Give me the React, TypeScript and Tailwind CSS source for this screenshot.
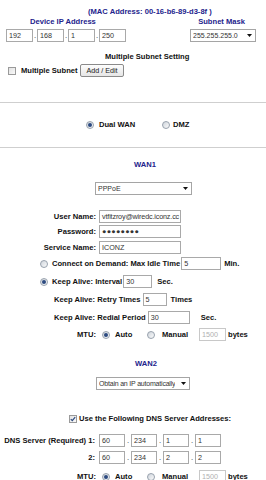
import React from 'react';

// ===== SMALL FORM PIECES =====
const Box = ({ className = '', value = '', disabled = false }: { className?: string; value?: string; disabled?: boolean }) => (
  <div
    className={`h-[13px] flex items-center pl-[2px] overflow-hidden whitespace-nowrap border bg-white font-normal text-[7.2px] shrink-0 ${
      disabled ? 'border-[#c8c8c8] text-[#b0b0b0]' : 'border-[#a9a9a9] text-[#333]'
    } ${className}`}
  >
    {value}
  </div>
);

const Dot = ({ className = '' }: { className?: string }) => (
  <span className={`h-[13px] flex items-end justify-center pb-[1px] font-normal text-[#333] shrink-0 ${className}`}>.</span>
);

const Select = ({ className = '', value }: { className?: string; value: string }) => (
  <div className={`h-[13px] flex items-center justify-between gap-[2px] pl-[2px] pr-[3px] border border-[#a5a5a5] bg-white font-normal text-[7px] text-[#333] shrink-0 ${className}`}>
    <span className="whitespace-nowrap overflow-hidden min-w-0">{value}</span>
    <svg width="5" height="3" viewBox="0 0 5 3" className="shrink-0">
      <path d="M0 0h5L2.5 3z" fill="#111" />
    </svg>
  </div>
);

const Radio = ({ checked = false }: { checked?: boolean }) => (
  <span className="w-[8px] h-[8px] rounded-full border border-[#97a1ad] bg-linear-to-br from-[#cfd5dc] to-[#fbfbfb] flex items-center justify-center shrink-0">
    {checked && <span className="w-[4px] h-[4px] rounded-full bg-[#2c4a80]" />}
  </span>
);

const Check = ({ checked = false }: { checked?: boolean }) => (
  <span className="w-[8px] h-[8px] border border-[#9a9a9a] bg-linear-to-br from-[#e2e2e2] to-[#fafafa] flex items-center justify-center shrink-0">
    {checked && (
      <svg width="6" height="6" viewBox="0 0 6 6">
        <path d="M0.8 3.2L2.3 4.7L5.2 1.2" stroke="#2c4a80" strokeWidth="1.2" fill="none" />
      </svg>
    )}
  </span>
);

const MtuRow = ({ className = '' }: { className?: string }) => (
  <div className={`h-[13px] flex items-center ${className}`}>
    <span className="w-[96px] text-right">MTU:</span>
    <span className="ml-[6px]"><Radio checked /></span>
    <span className="ml-[5px] w-[32px]">Auto</span>
    <Radio />
    <span className="ml-[7px] w-[37px]">Manual</span>
    <Box className="w-[27px]" value="1500" disabled />
    <span className="ml-[2px]">bytes</span>
  </div>
);

const App: React.FC = () => {
  return (
    <div className="w-[266px] h-[480px] overflow-hidden bg-white text-[7.6px] leading-[10px] font-bold text-[#111] font-['Liberation_Sans',Arial,sans-serif]">
      {/* LAN settings */}
      <div className="pt-[7px]">
        <div className="h-[10px] flex items-center pl-[88px] text-[#23238c]">(MAC Address: 00-16-b6-89-d3-8f )</div>
        <div className="h-[10px] flex items-center text-[#23238c]">
          <span className="ml-[30px]">Device IP Address</span>
          <span className="ml-auto mr-[21px]">Subnet Mask</span>
        </div>
        <div className="mt-[2px] h-[13px] flex items-center">
          <div className="ml-[6px] flex items-center">
            <Box className="w-[27px]" value="192" />
            <Dot className="w-[4px]" />
            <Box className="w-[27px]" value="168" />
            <Dot className="w-[4px]" />
            <Box className="w-[27px]" value="1" />
            <Dot className="w-[4px]" />
            <Box className="w-[27px]" value="250" />
          </div>
          <Select className="ml-auto mr-[10px] w-[66px]" value="255.255.255.0" />
        </div>
        <div className="mt-[10px] h-[10px] flex items-center pl-[105px]">Multiple Subnet Setting</div>
        <div className="mt-[2px] h-[13px] flex items-center pl-[8px]">
          <Check />
          <span className="ml-[5px] w-[59px]">Multiple Subnet</span>
          <button className="h-[13px] w-[44px] border border-[#8a8a8a] rounded-[2px] bg-linear-to-b from-[#fdfdfd] to-[#e6e6e6] font-normal text-[7.2px] text-[#222]">
            Add / Edit
          </button>
        </div>
      </div>

      <div className="mt-[25px] h-px bg-[#cfcfcf]" />

      {/* Mode */}
      <div className="mt-[16px] h-[12px] flex items-center pl-[86px]">
        <Radio checked />
        <span className="ml-[5px] w-[63px]">Dual WAN</span>
        <Radio />
        <span className="ml-[3px]">DMZ</span>
      </div>

      <div className="mt-[16px] h-px bg-[#cfcfcf]" />

      {/* WAN1 */}
      <div className="mt-[12px] h-[10px] flex items-center pl-[134px] text-[#23238c]">WAN1</div>
      <div className="mt-[12px] flex">
        <Select className="ml-[95px] w-[97px]" value="PPPoE" />
      </div>

      <div className="mt-[15px] h-[13px] flex items-center">
        <span className="w-[96px] text-right">User Name:</span>
        <Box className="ml-[3px] w-[82px] tracking-[-0.15px]" value="vtfitzroy@wiredc.iconz.cc" />
      </div>
      <div className="mt-[2px] h-[13px] flex items-center">
        <span className="w-[96px] text-right">Password:</span>
        <Box className="ml-[3px] w-[82px] tracking-[0.3px] text-[#222]" value="●●●●●●●●" />
      </div>
      <div className="mt-[3px] h-[13px] flex items-center">
        <span className="w-[96px] text-right">Service Name:</span>
        <Box className="ml-[3px] w-[82px]" value="ICONZ" />
      </div>

      <div className="mt-[3px] h-[13px] flex items-center pl-[40px]">
        <Radio />
        <span className="ml-[4px] whitespace-nowrap">Connect on Demand: Max Idle Time</span>
        <Box className="ml-[1px] w-[40px]" value="5" />
        <span className="ml-[3px]">Min.</span>
      </div>
      <div className="mt-[5px] h-[13px] flex items-center pl-[40px]">
        <Radio checked />
        <span className="ml-[4px] whitespace-nowrap">Keep Alive: Interval</span>
        <Box className="ml-[1px] w-[29px]" value="30" />
        <span className="ml-[5px]">Sec.</span>
      </div>
      <div className="mt-[5px] h-[13px] flex items-center pl-[54px]">
        <span className="whitespace-nowrap">Keep Alive: Retry Times</span>
        <Box className="ml-[2px] w-[24px]" value="5" />
        <span className="ml-[4px]">Times</span>
      </div>
      <div className="mt-[5px] h-[13px] flex items-center pl-[54px]">
        <span className="whitespace-nowrap">Keep Alive: Redial Period</span>
        <Box className="ml-[2px] w-[42px]" value="30" />
        <span className="ml-[11px]">Sec.</span>
      </div>
      <MtuRow className="mt-[4px]" />

      {/* WAN2 */}
      <div className="mt-[18px] h-[10px] flex items-center pl-[135px] text-[#23238c]">WAN2</div>
      <div className="mt-[8px] flex">
        <Select className="ml-[96px] w-[94px] text-[6.7px] tracking-[-0.2px]" value="Obtain an IP automatically" />
      </div>

      <div className="mt-[24px] h-[10px] flex items-center pl-[69px]">
        <Check checked />
        <span className="ml-[2px] whitespace-nowrap">Use the Following DNS Server Addresses:</span>
      </div>
      <div className="mt-[10px] h-[13px] flex items-center">
        <span className="w-[95px] text-right whitespace-nowrap">DNS Server (Required) 1:</span>
        <div className="ml-[4px] flex items-center">
          <Box className="w-[26px]" value="60" />
          <Dot className="w-[6px]" />
          <Box className="w-[26px]" value="234" />
          <Dot className="w-[6px]" />
          <Box className="w-[26px]" value="1" />
          <Dot className="w-[6px]" />
          <Box className="w-[26px]" value="1" />
        </div>
      </div>
      <div className="mt-[4px] h-[13px] flex items-center">
        <span className="w-[95px] text-right">2:</span>
        <div className="ml-[4px] flex items-center">
          <Box className="w-[26px]" value="60" />
          <Dot className="w-[6px]" />
          <Box className="w-[26px]" value="234" />
          <Dot className="w-[6px]" />
          <Box className="w-[26px]" value="2" />
          <Dot className="w-[6px]" />
          <Box className="w-[26px]" value="2" />
        </div>
      </div>
      <MtuRow className="mt-[6px]" />
    </div>
  );
};

export default App;
